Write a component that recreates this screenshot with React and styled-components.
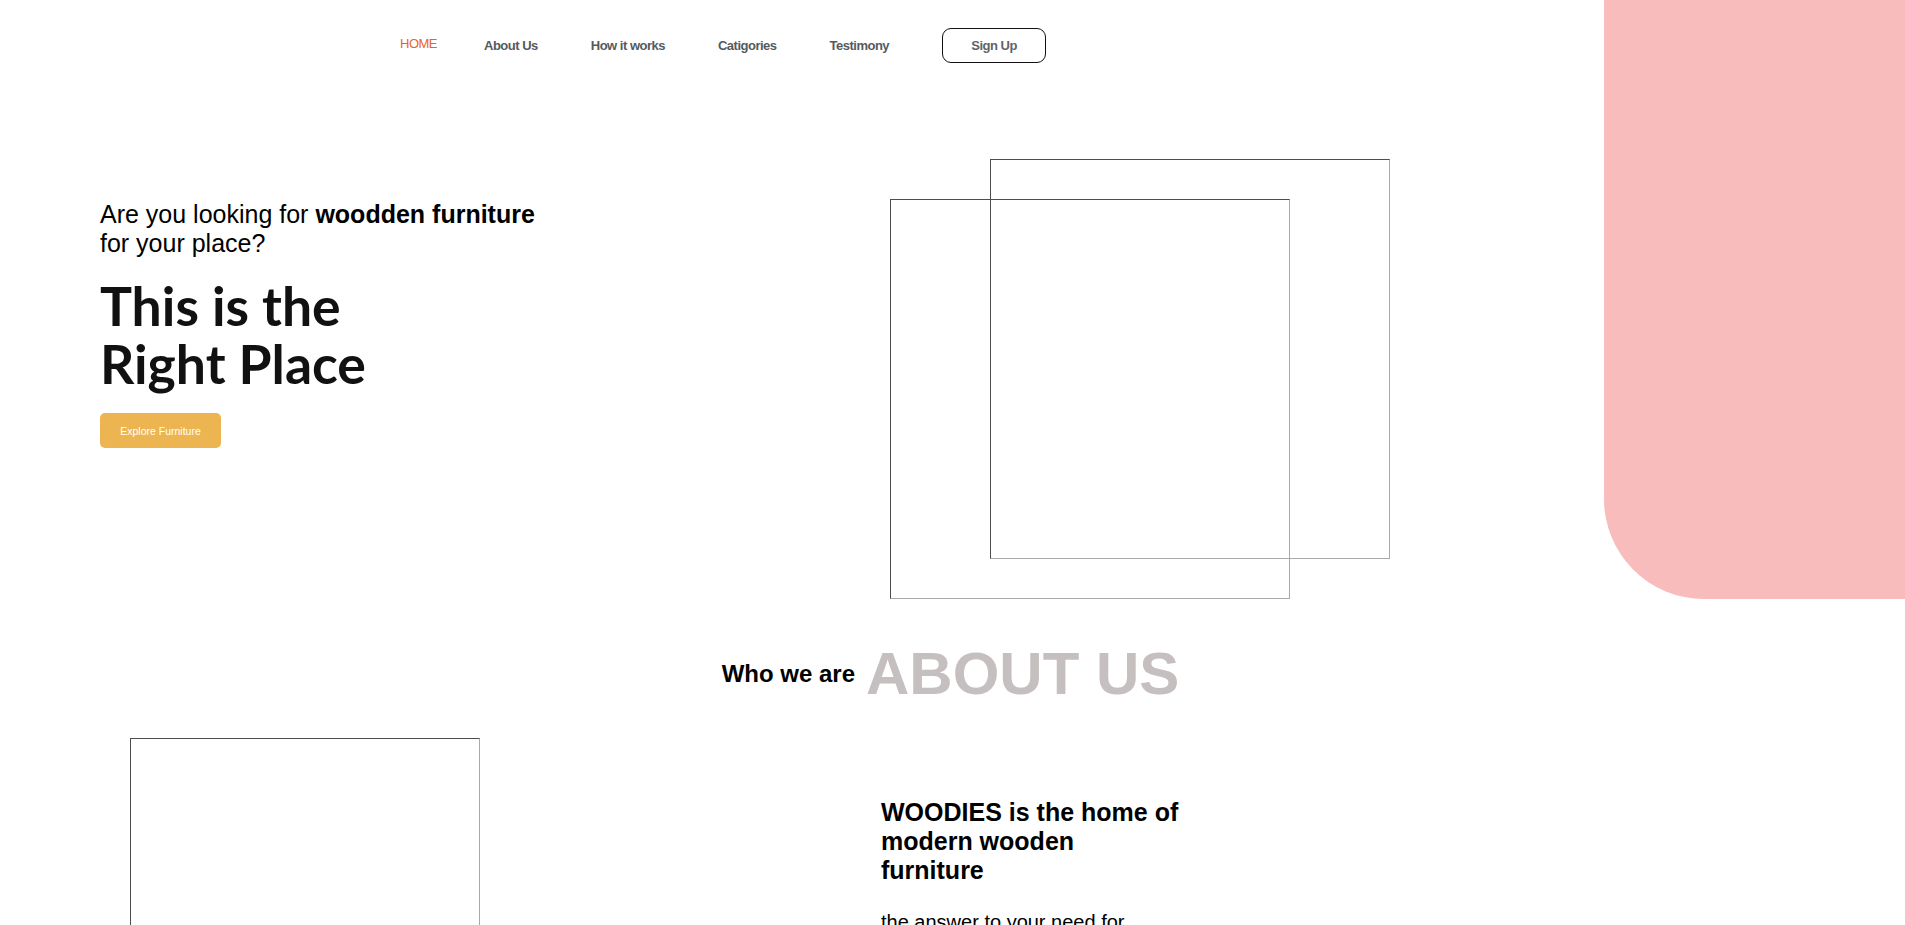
import React from 'react'
import styled, { createGlobalStyle } from 'styled-components'

const GlobalStyle = createGlobalStyle`
  html, body {
    margin: 0;
    padding: 0;
    background: #fff;
  }
  body {
    font-family: 'Liberation Sans', Arial, sans-serif;
    color: #000;
    overflow: hidden;
  }
`

const navLinks = ['About Us', 'How it works', 'Catigories', 'Testimony']

export default function App() {
  return (
    <Page>
      <GlobalStyle />
      <PinkBlob />

      <Nav>
        <NavLink active>HOME</NavLink>
        {navLinks.map((link) => (
          <NavLink key={link}>{link}</NavLink>
        ))}
        <SignUp>Sign Up</SignUp>
      </Nav>

      <Hero>
        <HeroText>
          <Lead>
            Are you looking for <strong>woodden furniture</strong>
            <br />
            for your place?
          </Lead>
          <Title>
            This is the
            <br />
            Right Place
          </Title>
          <Explore>Explore Furniture</Explore>
        </HeroText>

        <HeroImages>
          <Frame size={400} behind />
          <Frame size={400} />
        </HeroImages>
      </Hero>

      <SectionTitle>
        <Small>Who we are</Small>
        <Big>ABOUT US</Big>
      </SectionTitle>

      <About>
        <Frame size={350} />
        <AboutText>
          <AboutHeading>WOODIES is the home of modern wooden furniture</AboutHeading>
          <AboutCopy>
            the answer to your need for quality furniture that fits your place.
          </AboutCopy>
        </AboutText>
      </About>
    </Page>
  )
}

const Page = styled.div`
  position: relative;
  width: 1905px;
  min-height: 925px;
`

const PinkBlob = styled.div`
  position: absolute;
  top: 0;
  right: 0;
  width: 301px;
  height: 599px;
  background: #f8bcbc;
  border-bottom-left-radius: 100px;
  z-index: 0;
`

const Nav = styled.nav`
  display: flex;
  align-items: center;
  gap: 53px;
  padding: 28px 0 0 400px;
  font-family: 'Liberation Sans', Arial, sans-serif;
  font-size: 13px;
  letter-spacing: -0.5px;
  font-weight: 700;
`

const NavLink = styled.a`
  color: ${(p) => (p.active ? '#e8641f' : '#555a60')};
  font-weight: ${(p) => (p.active ? 400 : 700)};
  margin-bottom: ${(p) => (p.active ? '4px' : '0')};
  margin-right: ${(p) => (p.active ? '-6px' : '0')};
  text-decoration: none;
  cursor: pointer;
`

const SignUp = styled.button`
  width: 104px;
  height: 35px;
  background: #fff;
  border: 1px solid #111;
  border-radius: 9px;
  font-family: inherit;
  font-size: 13px;
  letter-spacing: -0.5px;
  font-weight: 700;
  color: #60646a;
  cursor: pointer;
`

const Hero = styled.section`
  display: flex;
  padding-left: 100px;
`

const HeroText = styled.div`
  flex: 0 0 790px;
  padding-top: 137px;
`

const Lead = styled.p`
  margin: 0;
  font-size: 25px;
  line-height: 29px;
  strong {
    font-weight: 700;
  }
`

const Title = styled.h1`
  margin: 17.5px 0 0;
  font-family: Lato, 'Open Sans', sans-serif;
  font-size: 53.5px;
  line-height: 58px;
  font-weight: 700;
  color: #111;
`

const Explore = styled.button`
  margin-top: 21.5px;
  width: 121px;
  height: 35px;
  border: none;
  border-radius: 5px;
  background: #ecb551;
  color: #fff;
  font-family: 'Liberation Sans', Arial, sans-serif;
  font-size: 10.5px;
  cursor: pointer;
`

const HeroImages = styled.div`
  position: relative;
  padding-top: 136px;
`

const Frame = styled.div`
  box-sizing: border-box;
  width: ${(p) => p.size}px;
  height: ${(p) => p.size}px;
  flex-shrink: 0;
  border-style: solid;
  border-width: 1px;
  border-color: #4d4d4d #a9a9a9 #a9a9a9 #4d4d4d;
  ${(p) =>
    p.behind &&
    `
    position: absolute;
    left: 100px;
    top: 96px;
  `}
`

const SectionTitle = styled.div`
  display: flex;
  align-items: center;
  justify-content: center;
  gap: 11px;
  margin-top: 40px;
  padding-right: 4px;
`

const Small = styled.span`
  font-size: 24px;
  font-weight: 700;
`

const Big = styled.span`
  font-size: 60px;
  font-weight: 700;
  color: #c6bfc0;
`

const About = styled.section`
  display: flex;
  gap: 401px;
  margin-top: 30px;
  padding-left: 130px;
`

const AboutText = styled.div`
  padding-top: 60px;
`

const AboutHeading = styled.h2`
  margin: 0;
  width: 300px;
  font-size: 25px;
  line-height: 29px;
  font-weight: 700;
`

const AboutCopy = styled.p`
  margin: 25px 0 0;
  width: 290px;
  font-size: 20px;
  line-height: 24px;
`
